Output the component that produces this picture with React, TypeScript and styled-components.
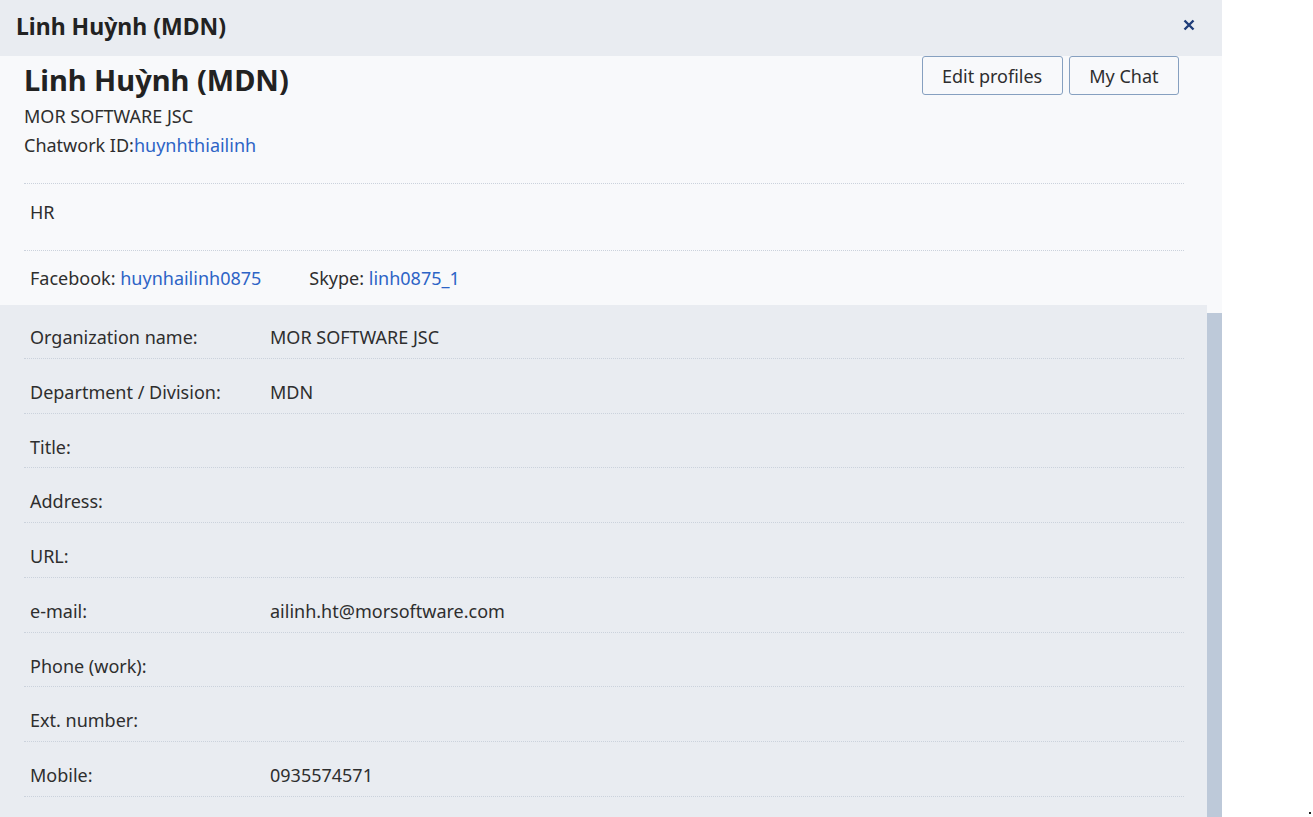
import React from "react";
import styled, { createGlobalStyle } from "styled-components";

const Global = createGlobalStyle`
  html, body { margin: 0; padding: 0; background: #ffffff; }
  body { font-family: "Noto Sans", "Open Sans", sans-serif; color: #2e2e2e; }
  * { box-sizing: border-box; }
`;

const Dialog = styled.div`
  width: 1222px;
  height: 817px;
  display: flex;
  flex-direction: column;
  overflow: hidden;
`;

const Header = styled.header`
  height: 56px;
  flex: none;
  background: #e9ecf1;
  display: flex;
  align-items: center;
  justify-content: space-between;
  padding: 0 24px 0 16px;
`;

const HeaderTitle = styled.h1`
  margin: 0 0 4px;
  font-size: 23px;
  font-weight: 700;
  color: #222;
  line-height: 30px;
`;

const CloseButton = styled.button`
  border: none;
  background: transparent;
  padding: 0;
  width: 18px;
  height: 18px;
  display: flex;
  align-items: center;
  justify-content: center;
  margin-bottom: 6px;
  cursor: pointer;
`;

const Body = styled.div`
  flex: 1;
  display: flex;
  min-height: 0;
  background: #f8f9fb;
`;

const Content = styled.div`
  flex: 1;
  display: flex;
  flex-direction: column;
`;

const Scrollbar = styled.div`
  width: 15px;
  flex: none;
  padding-top: 257px;
  display: flex;
  flex-direction: column;
`;

const Thumb = styled.div`
  flex: 1;
  background: #bdc9d9;
`;

const TopSection = styled.section`
  padding: 0 23px 0 24px;
  background: #f8f9fb;
`;

const HeadRow = styled.div`
  display: flex;
  justify-content: space-between;
  align-items: flex-start;
  padding-bottom: 23px;
  border-bottom: 1px dotted #cbd2dc;
`;

const Identity = styled.div`
  display: flex;
  flex-direction: column;
`;

const Name = styled.h2`
  margin: 4px 0 0;
  font-size: 29px;
  line-height: 39px;
  font-weight: 700;
  color: #222;
`;

const InfoLine = styled.div<{ $first?: boolean }>`
  font-size: 18px;
  line-height: 29px;
  margin-top: ${(p) => (p.$first ? "3px" : "0")};
`;

const Link = styled.a`
  color: #2d64c6;
  text-decoration: none;
`;

const Actions = styled.div`
  display: flex;
  gap: 6px;
  margin-right: 5px;
`;

const Button = styled.button`
  height: 39px;
  padding: 0 19.5px;
  border: 1px solid #86a0c0;
  border-radius: 3px;
  background: #f8f9fb;
  font-family: inherit;
  font-size: 18px;
  color: #2e2e2e;
  cursor: pointer;
`;

const Block = styled.div<{ $top: number; $bottom: number; $border?: boolean }>`
  padding: ${(p) => `${p.$top}px 6px ${p.$bottom}px`};
  font-size: 18px;
  line-height: 24px;
  border-bottom: ${(p) => (p.$border ? "1px dotted #cbd2dc" : "none")};
  display: flex;
  gap: 48px;
`;

const Details = styled.section`
  flex: 1;
  background: #e9ecf1;
  padding: 0 23px 0 24px;
`;

const Row = styled.div`
  display: grid;
  grid-template-columns: 240px 1fr;
  padding: 21px 6px 8.75px;
  font-size: 18px;
  line-height: 24px;
  border-bottom: 1px dotted #cbd2dc;

  &:first-child {
    padding-top: 20px;
  }
`;

const Label = styled.span``;
const Value = styled.span``;

const Dot = styled.span`
  position: absolute;
  right: 2px;
  bottom: 3px;
  width: 2px;
  height: 2px;
  background: #222;
`;

const rows: [string, string][] = [
  ["Organization name:", "MOR SOFTWARE JSC"],
  ["Department / Division:", "MDN"],
  ["Title:", ""],
  ["Address:", ""],
  ["URL:", ""],
  ["e-mail:", "ailinh.ht@morsoftware.com"],
  ["Phone (work):", ""],
  ["Ext. number:", ""],
  ["Mobile:", "0935574571"],
];

export default function App() {
  return (
    <>
      <Global />
      <Dialog>
        <Header>
          <HeaderTitle>Linh Huỳnh (MDN)</HeaderTitle>
          <CloseButton aria-label="Close">
            <svg width="12" height="12" viewBox="0 0 12 12">
              <path d="M1.5 1.5 L10.5 10.5 M10.5 1.5 L1.5 10.5" stroke="#1f3d7a" strokeWidth="2.4" strokeLinecap="butt" />
            </svg>
          </CloseButton>
        </Header>
        <Body>
          <Content>
            <TopSection>
              <HeadRow>
                <Identity>
                  <Name>Linh Huỳnh (MDN)</Name>
                  <InfoLine $first>MOR SOFTWARE JSC</InfoLine>
                  <InfoLine>
                    Chatwork ID:<Link href="#">huynhthiailinh</Link>
                  </InfoLine>
                </Identity>
                <Actions>
                  <Button>Edit profiles</Button>
                  <Button>My Chat</Button>
                </Actions>
              </HeadRow>
              <Block $top={16} $bottom={26} $border>
                HR
              </Block>
              <Block $top={15} $bottom={15}>
                <span>
                  Facebook: <Link href="#">huynhailinh0875</Link>
                </span>
                <span>
                  Skype: <Link href="#">linh0875_1</Link>
                </span>
              </Block>
            </TopSection>
            <Details>
              {rows.map(([l, v]) => (
                <Row key={l}>
                  <Label>{l}</Label>
                  <Value>{v}</Value>
                </Row>
              ))}
            </Details>
          </Content>
          <Scrollbar>
            <Thumb />
          </Scrollbar>
        </Body>
      </Dialog>
      <Dot />
    </>
  );
}
